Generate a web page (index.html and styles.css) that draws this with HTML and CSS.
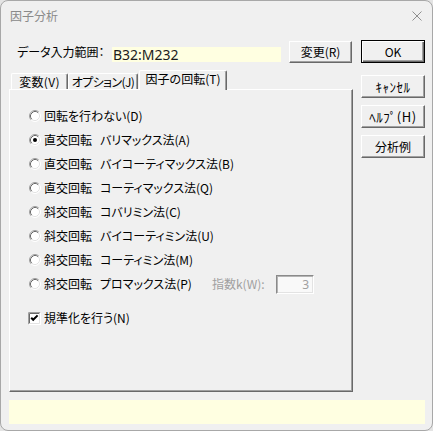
FILE: index.html
```html
<!DOCTYPE html>
<html lang="ja">
<head>
<meta charset="utf-8">
<title>因子分析</title>
<link rel="stylesheet" href="styles.css">
</head>
<body>
<div class="window">
  <div class="titlebar">
    <span class="title">因子分析</span>
    <svg class="close" width="10" height="10" viewBox="0 0 10 10"><path d="M0.5 0.5L9.5 9.5M9.5 0.5L0.5 9.5" stroke="#8f8f8f" stroke-width="1" fill="none"/></svg>
  </div>
  <div class="body">
    <div class="main">
      <div class="leftcol">
        <div class="range-row">
          <span class="range-label">データ入力範囲：</span>
          <span class="range-field">B32:M232</span>
          <button class="btn btn-change">変更(R)</button>
        </div>
        <div class="tabs">
          <div class="tab tab-vars">変数(V)</div>
          <div class="tab tab-opts">オプション(J)</div>
          <div class="tab tab-rot">因子の回転(T)</div>
        </div>
        <div class="panel">
          <div class="radio-row">
            <svg class="radio" width="12" height="12" viewBox="0 0 12 12"><circle cx="6" cy="6" r="5" fill="#fff"/><path d="M2.11 9.89A5.5 5.5 0 0 1 9.89 2.11" fill="none" stroke="#a0a0a0"/><path d="M2.82 9.18A4.5 4.5 0 0 1 9.18 2.82" fill="none" stroke="#696969"/><path d="M9.89 2.11A5.5 5.5 0 0 1 2.11 9.89" fill="none" stroke="#fff"/><path d="M9.18 2.82A4.5 4.5 0 0 1 2.82 9.18" fill="none" stroke="#e3e3e3"/></svg>
            <span class="radio-text">回転を行わない(D)</span>
          </div>
          <div class="radio-row">
            <svg class="radio" width="12" height="12" viewBox="0 0 12 12"><circle cx="6" cy="6" r="5" fill="#fff"/><path d="M2.11 9.89A5.5 5.5 0 0 1 9.89 2.11" fill="none" stroke="#a0a0a0"/><path d="M2.82 9.18A4.5 4.5 0 0 1 9.18 2.82" fill="none" stroke="#696969"/><path d="M9.89 2.11A5.5 5.5 0 0 1 2.11 9.89" fill="none" stroke="#fff"/><path d="M9.18 2.82A4.5 4.5 0 0 1 2.82 9.18" fill="none" stroke="#e3e3e3"/><circle cx="6" cy="6" r="2" fill="#000"/></svg>
            <span class="radio-text"><span class="kind">直交回転</span>バリマックス法(A)</span>
          </div>
          <div class="radio-row">
            <svg class="radio" width="12" height="12" viewBox="0 0 12 12"><circle cx="6" cy="6" r="5" fill="#fff"/><path d="M2.11 9.89A5.5 5.5 0 0 1 9.89 2.11" fill="none" stroke="#a0a0a0"/><path d="M2.82 9.18A4.5 4.5 0 0 1 9.18 2.82" fill="none" stroke="#696969"/><path d="M9.89 2.11A5.5 5.5 0 0 1 2.11 9.89" fill="none" stroke="#fff"/><path d="M9.18 2.82A4.5 4.5 0 0 1 2.82 9.18" fill="none" stroke="#e3e3e3"/></svg>
            <span class="radio-text"><span class="kind">直交回転</span>バイコーティマックス法(B)</span>
          </div>
          <div class="radio-row">
            <svg class="radio" width="12" height="12" viewBox="0 0 12 12"><circle cx="6" cy="6" r="5" fill="#fff"/><path d="M2.11 9.89A5.5 5.5 0 0 1 9.89 2.11" fill="none" stroke="#a0a0a0"/><path d="M2.82 9.18A4.5 4.5 0 0 1 9.18 2.82" fill="none" stroke="#696969"/><path d="M9.89 2.11A5.5 5.5 0 0 1 2.11 9.89" fill="none" stroke="#fff"/><path d="M9.18 2.82A4.5 4.5 0 0 1 2.82 9.18" fill="none" stroke="#e3e3e3"/></svg>
            <span class="radio-text"><span class="kind">直交回転</span>コーティマックス法(Q)</span>
          </div>
          <div class="radio-row">
            <svg class="radio" width="12" height="12" viewBox="0 0 12 12"><circle cx="6" cy="6" r="5" fill="#fff"/><path d="M2.11 9.89A5.5 5.5 0 0 1 9.89 2.11" fill="none" stroke="#a0a0a0"/><path d="M2.82 9.18A4.5 4.5 0 0 1 9.18 2.82" fill="none" stroke="#696969"/><path d="M9.89 2.11A5.5 5.5 0 0 1 2.11 9.89" fill="none" stroke="#fff"/><path d="M9.18 2.82A4.5 4.5 0 0 1 2.82 9.18" fill="none" stroke="#e3e3e3"/></svg>
            <span class="radio-text"><span class="kind">斜交回転</span>コバリミン法(C)</span>
          </div>
          <div class="radio-row">
            <svg class="radio" width="12" height="12" viewBox="0 0 12 12"><circle cx="6" cy="6" r="5" fill="#fff"/><path d="M2.11 9.89A5.5 5.5 0 0 1 9.89 2.11" fill="none" stroke="#a0a0a0"/><path d="M2.82 9.18A4.5 4.5 0 0 1 9.18 2.82" fill="none" stroke="#696969"/><path d="M9.89 2.11A5.5 5.5 0 0 1 2.11 9.89" fill="none" stroke="#fff"/><path d="M9.18 2.82A4.5 4.5 0 0 1 2.82 9.18" fill="none" stroke="#e3e3e3"/></svg>
            <span class="radio-text"><span class="kind">斜交回転</span>バイコーティミン法(U)</span>
          </div>
          <div class="radio-row">
            <svg class="radio" width="12" height="12" viewBox="0 0 12 12"><circle cx="6" cy="6" r="5" fill="#fff"/><path d="M2.11 9.89A5.5 5.5 0 0 1 9.89 2.11" fill="none" stroke="#a0a0a0"/><path d="M2.82 9.18A4.5 4.5 0 0 1 9.18 2.82" fill="none" stroke="#696969"/><path d="M9.89 2.11A5.5 5.5 0 0 1 2.11 9.89" fill="none" stroke="#fff"/><path d="M9.18 2.82A4.5 4.5 0 0 1 2.82 9.18" fill="none" stroke="#e3e3e3"/></svg>
            <span class="radio-text"><span class="kind">斜交回転</span>コーティミン法(M)</span>
          </div>
          <div class="radio-row">
            <div class="radio-main">
              <svg class="radio" width="12" height="12" viewBox="0 0 12 12"><circle cx="6" cy="6" r="5" fill="#fff"/><path d="M2.11 9.89A5.5 5.5 0 0 1 9.89 2.11" fill="none" stroke="#a0a0a0"/><path d="M2.82 9.18A4.5 4.5 0 0 1 9.18 2.82" fill="none" stroke="#696969"/><path d="M9.89 2.11A5.5 5.5 0 0 1 2.11 9.89" fill="none" stroke="#fff"/><path d="M9.18 2.82A4.5 4.5 0 0 1 2.82 9.18" fill="none" stroke="#e3e3e3"/></svg>
              <span class="radio-text"><span class="kind">斜交回転</span>プロマックス法(P)</span>
            </div>
            <span class="index-label">指数k(W):</span>
            <span class="index-field">3</span>
          </div>
          <div class="check-row">
            <svg class="checkbox" width="13" height="13" viewBox="0 0 13 13"><rect x="0" y="0" width="13" height="13" fill="#fff"/><path d="M0.5 12.5V0.5H12.5" fill="none" stroke="#a0a0a0"/><path d="M1.5 11.5V1.5H11.5" fill="none" stroke="#696969"/><path d="M0.5 12.5H12.5V0.5" fill="none" stroke="#fff"/><path d="M1.5 11.5H11.5V1.5" fill="none" stroke="#e3e3e3"/><polyline points="3.2,5.8 5.2,7.8 9.6,3.4" fill="none" stroke="#000" stroke-width="2"/></svg>
            <span class="check-text">規準化を行う(N)</span>
          </div>
        </div>
      </div>
      <div class="rightcol">
        <button class="btn btn-ok">OK</button>
        <button class="btn btn-side btn-cancel btn-hw">ｷｬﾝｾﾙ</button>
        <button class="btn btn-side btn-hw">ﾍﾙﾌﾟ(H)</button>
        <button class="btn btn-side">分析例</button>
      </div>
    </div>
    <div class="statusbar"></div>
  </div>
</div>
</body>
</html>
```
FILE: styles.css
```css
html, body {
  margin: 0;
  padding: 0;
  background: #e4e4e4;
}

body {
  width: 433px;
  height: 431px;
  font-family: "Noto Sans CJK JP", "Noto Sans", sans-serif;
  font-size: 12px;
  color: #000;
  font-feature-settings: "palt";
}

.window {
  box-sizing: border-box;
  width: 433px;
  height: 431px;
  border: 1px solid #a8a8a8;
  border-radius: 8px;
  background: #f0f0f0;
  display: flex;
  flex-direction: column;
  overflow: hidden;
}

.titlebar {
  flex: none;
  box-sizing: border-box;
  height: 32px;
  padding: 0 10px 3px 9px;
  display: flex;
  align-items: center;
  justify-content: space-between;
}

.title {
  color: #8a8a8a;
  font-size: 12px;
  line-height: 14px;
}

.close {
  display: block;
}

.body {
  flex: 1;
  display: flex;
  flex-direction: column;
  padding: 7px 7px 6px 8px;
}

.main {
  height: 352px;
  display: flex;
  gap: 8px;
}

.leftcol {
  width: 344px;
  display: flex;
  flex-direction: column;
}

.rightcol {
  width: 64px;
  display: flex;
  flex-direction: column;
}

.range-row {
  height: 23px;
  display: flex;
  align-items: center;
  flex: none;
}

.range-label {
  margin-left: 8px;
  width: 95px;
  white-space: nowrap;
  line-height: 14px;
}

.range-field {
  box-sizing: border-box;
  width: 169px;
  height: 15px;
  align-self: flex-end;
  margin-bottom: 1px;
  padding-left: 1px;
  background: #ffffe1;
  color: #1c1c1c;
  font-family: "Noto Sans", "Liberation Sans", sans-serif;
  font-size: 14px;
  line-height: 15px;
  white-space: nowrap;
}

.btn {
  box-sizing: border-box;
  margin: 0;
  padding: 0;
  font-family: inherit;
  font-size: 12px;
  line-height: 14px;
  color: #000;
  background: #f0f0f0;
  border: 1px solid;
  border-color: #fff #696969 #696969 #fff;
  border-radius: 0;
  box-shadow: inset -1px -1px #a0a0a0, inset 1px 1px #f0f0f0;
  white-space: nowrap;
}

.btn-change {
  width: 63px;
  height: 22px;
  margin-left: 8px;
  align-self: flex-start;
  margin-top: 1px;
}

.btn-ok {
  width: 64px;
  height: 23px;
  border: 1px solid #000;
  box-shadow: inset 1px 1px #fff, inset -1px -1px #696969, inset -2px -2px #a0a0a0;
}

.btn-side {
  width: 64px;
  height: 23px;
  margin-top: 7px;
}

.btn-cancel {
  margin-top: 12px;
}

.btn-hw {
  font-size: 13px;
  letter-spacing: 0.5px;
}

.tabs {
  flex: none;
  height: 26px;
  display: flex;
  align-items: flex-end;
  padding-left: 2px;
}

.tab {
  box-sizing: border-box;
  height: 16px;
  border-top: 1px solid #fff;
  border-left: 1px solid #fff;
  border-right: 1px solid #696969;
  border-radius: 2px 2px 0 0;
  box-shadow: inset -1px 0 #a0a0a0;
  text-align: center;
  line-height: 15px;
  white-space: nowrap;
  background: #f0f0f0;
}

.tab-vars {
  width: 57px;
  letter-spacing: 0.3px;
}

.tab-opts {
  width: 70px;
  letter-spacing: -0.6px;
}

.tab-rot {
  width: 88px;
  height: 20px;
  margin-left: 1px;
  margin-bottom: -1px;
  position: relative;
  z-index: 1;
}

.panel {
  flex: 1;
  box-sizing: border-box;
  border: 1px solid;
  border-color: #fff #696969 #696969 #fff;
  box-shadow: inset -1px -1px #a0a0a0;
  padding: 14px 0 0 19px;
  display: flex;
  flex-direction: column;
}

.radio-row {
  height: 24px;
  display: flex;
  align-items: center;
  flex: none;
}

.radio-main {
  width: 183px;
  display: flex;
  align-items: center;
}

.radio {
  display: block;
  flex: none;
  margin-right: 3px;
}

.radio-text,
.check-text {
  white-space: nowrap;
  line-height: 14px;
}

.kind {
  display: inline-block;
  width: 56px;
}

.index-label {
  width: 64px;
  color: #a0a0a0;
  white-space: nowrap;
  line-height: 14px;
}

.index-field {
  box-sizing: border-box;
  width: 38px;
  height: 19px;
  border: 1px solid;
  border-color: #8a8a8a #fff #fff #8a8a8a;
  box-shadow: inset 1px 1px #b4b4b4, inset -1px -1px #e3e3e3;
  background: #f9f9f9;
  color: #a0a0a0;
  font-family: "Noto Sans", "Liberation Sans", sans-serif;
  font-size: 12px;
  line-height: 17px;
  text-align: right;
  padding-right: 4px;
}

.check-row {
  height: 24px;
  margin-top: 10px;
  margin-left: -1px;
  display: flex;
  align-items: center;
  flex: none;
}

.checkbox {
  display: block;
  flex: none;
  margin-right: 3px;
}

.statusbar {
  flex: none;
  height: 24px;
  margin-top: 8px;
  background: #ffffe1;
}
```
